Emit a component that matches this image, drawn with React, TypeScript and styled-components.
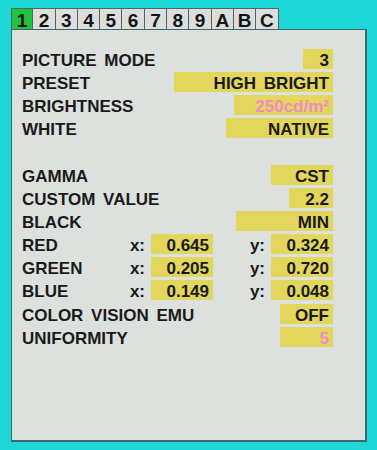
import React from "react";
import styled, { createGlobalStyle } from "styled-components";

const Global = createGlobalStyle`
  html, body { margin: 0; padding: 0; background: #1ed8d8; }
  body { font-family: "Liberation Sans", Arial, sans-serif; }
`;

const Screen = styled.div`
  width: 377px;
  height: 450px;
  box-sizing: border-box;
  padding: 8px 0 0 11px;
  background: #1ed8d8;
`;

const Tabs = styled.div`
  display: flex;
  height: 21px;
`;

const Tab = styled.div<{ $active?: boolean }>`
  width: 22.3px;
  height: 21px;
  box-sizing: border-box;
  border: 1px solid #56625f;
  border-bottom: none;
  border-left-width: ${(p) => (p.$active ? 1 : 0)}px;
  background: ${(p) => (p.$active ? "#1ec43c" : "#dcdedb")};
  color: #151515;
  font-weight: bold;
  font-size: 19px;
  line-height: 23px;
  text-align: center;
`;

const Panel = styled.div`
  width: 356px;
  height: 413px;
  box-sizing: border-box;
  border: 1px solid #3c6a6a;
  border-right-width: 2px;
  border-bottom-width: 2px;
  background: #dde1dd;
  padding: 17px 0 0 10px;
`;

const Row = styled.div`
  display: flex;
  align-items: center;
  height: 23.2px;
  width: 311px;
`;

const Label = styled.div`
  flex: 1;
  height: 20px;
  box-sizing: border-box;
  padding-top: 2px;
  line-height: 20px;
  font-size: 17px;
  font-weight: bold;
  color: #1a1a1a;
  word-spacing: 3px;
  white-space: nowrap;
`;

const Value = styled.div<{ $w: number; $pink?: boolean }>`
  width: ${(p) => p.$w}px;
  height: 20px;
  box-sizing: border-box;
  padding: 2px 4px 0 0;
  line-height: 20px;
  background: #e2d65c;
  text-align: right;
  font-size: 17px;
  font-weight: bold;
  color: ${(p) => (p.$pink ? "#ee8cc8" : "#1a1a1a")};
  word-spacing: 3px;
  white-space: nowrap;
`;

const Axis = styled.div<{ $w: number }>`
  width: ${(p) => p.$w}px;
  height: 20px;
  box-sizing: border-box;
  padding: 2px 6px 0 0;
  text-align: right;
  line-height: 20px;
  font-size: 17px;
  font-weight: bold;
  color: #1a1a1a;
`;

const Spacer = styled.div`
  height: 23.2px;
`;

type Simple = { label: string; value: React.ReactNode; w: number; pink?: boolean };

const top: Simple[] = [
  { label: "PICTURE MODE", value: "3", w: 30 },
  { label: "PRESET", value: "HIGH BRIGHT", w: 159 },
  { label: "BRIGHTNESS", value: "250cd/m²", w: 99, pink: true },
  { label: "WHITE", value: "NATIVE", w: 107 },
];

const mid: Simple[] = [
  { label: "GAMMA", value: "CST", w: 62 },
  { label: "CUSTOM VALUE", value: "2.2", w: 44 },
  { label: "BLACK", value: "MIN", w: 97 },
];

const xy = [
  { label: "RED", x: "0.645", y: "0.324" },
  { label: "GREEN", x: "0.205", y: "0.720" },
  { label: "BLUE", x: "0.149", y: "0.048" },
];

const bottom: Simple[] = [
  { label: "COLOR VISION EMU", value: "OFF", w: 53 },
  { label: "UNIFORMITY", value: "5", w: 53, pink: true },
];

const tabs = ["1", "2", "3", "4", "5", "6", "7", "8", "9", "A", "B", "C"];

const SimpleRow = ({ r }: { r: Simple }) => (
  <Row>
    <Label>{r.label}</Label>
    <Value $w={r.w} $pink={r.pink}>{r.value}</Value>
  </Row>
);

export default function App() {
  return (
    <Screen>
      <Global />
      <Tabs>
        {tabs.map((t, i) => (
          <Tab key={t} $active={i === 0}>{t}</Tab>
        ))}
      </Tabs>
      <Panel>
        {top.map((r) => <SimpleRow key={r.label} r={r} />)}
        <Spacer />
        {mid.map((r) => <SimpleRow key={r.label} r={r} />)}
        {xy.map((r) => (
          <Row key={r.label}>
            <Label>{r.label}</Label>
            <Axis $w={23}>x:</Axis>
            <Value $w={62}>{r.x}</Value>
            <Axis $w={58}>y:</Axis>
            <Value $w={62}>{r.y}</Value>
          </Row>
        ))}
        {bottom.map((r) => <SimpleRow key={r.label} r={r} />)}
      </Panel>
    </Screen>
  );
}
